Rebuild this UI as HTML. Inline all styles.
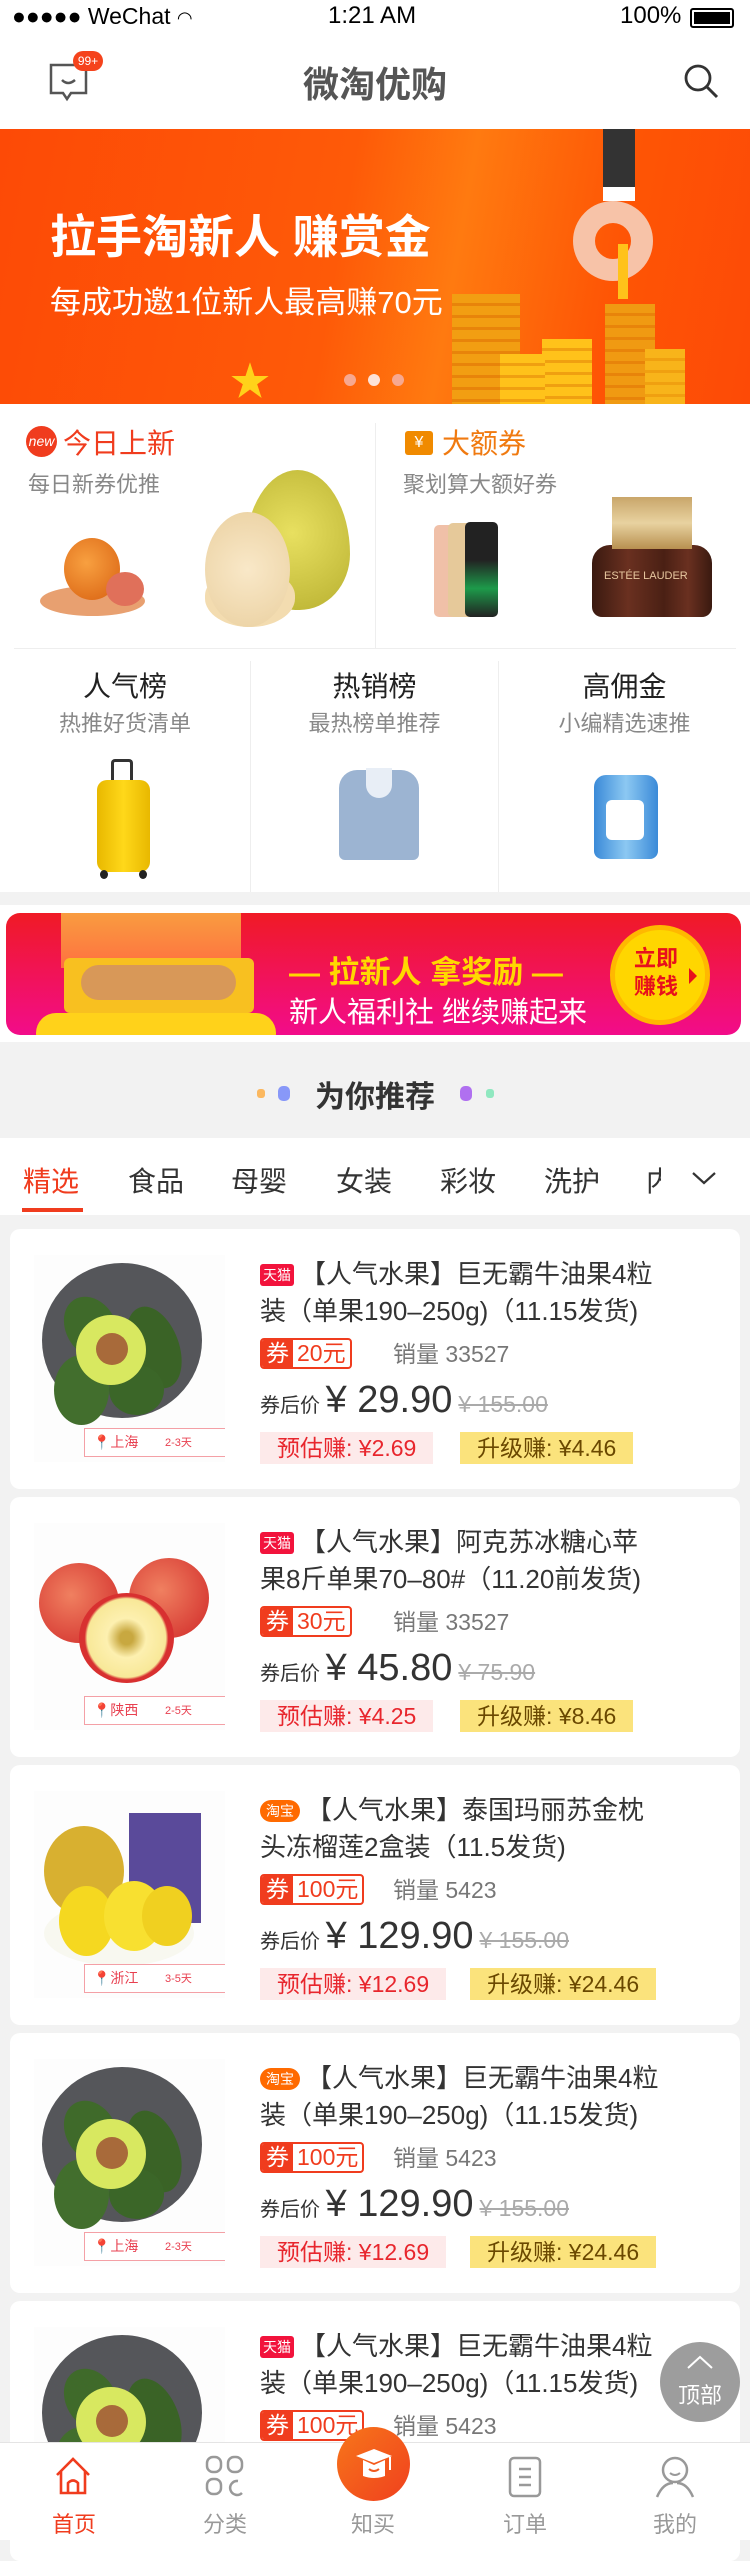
<!DOCTYPE html>
<html><head><meta charset="utf-8">
<style>
*{margin:0;padding:0;box-sizing:border-box}
body{width:750px;height:2540px;position:relative;overflow:hidden;background:#f2f2f2;font-family:"Liberation Sans","Noto Sans CJK SC",sans-serif;color:#333}
.a{position:absolute}
.w{white-space:nowrap}
.card{position:absolute;left:10px;width:730px;height:260px;background:#fff;border-radius:10px;overflow:hidden}
.img{position:absolute;left:24px;top:26px;width:191px;height:207px;background:#fdfdfd}
.loc{position:absolute;left:50px;top:173px;width:141px;height:29px;border:1px solid #f4a0a6;border-right:none;background:#fff;font-size:11px;color:#e84050}
.t{position:absolute;left:250px;top:27px;font-size:26px;line-height:37px;color:#333;white-space:nowrap}
.bd{display:inline-block;vertical-align:3px;font-size:14px;line-height:22px;height:22px;color:#fff;padding:0 3px;margin-right:6px}
.tm{background:#f2133c;border-radius:3px}
.tb{background:#ff6a00;border-radius:11px;padding:0 6px}
.cp{position:absolute;left:250px;top:109px;height:31px;border:2px solid #f03c1e;border-radius:4px;font-size:23px;line-height:27px;display:flex;overflow:hidden}
.cp b{font-weight:normal;background:#f03c1e;color:#fff;padding:0 4px}
.cp i{font-style:normal;color:#f03c1e;padding:0 4px}
.sv{position:absolute;top:111px;font-size:23px;color:#777;line-height:28px}
.pr{position:absolute;left:250px;top:150px;white-space:nowrap;color:#333}
.pr s{color:#aaa;font-size:23px;margin-left:6px}
.e{position:absolute;top:203px;height:32px;line-height:32px;font-size:23px;padding:0 17px;white-space:nowrap}
.e1{left:250px;background:#fdeaea;color:#e8262d}
.e2{background:#fbe37c;color:#6a4800}
</style></head><body>
<div class="a" style="left:0;top:0;width:750px;height:130px;background:#fff"></div>
<div class="a w" style="left:12px;top:3px;font-size:23px;color:#000">●●●●● WeChat <span style="font-size:18px">&#x25E0;</span></div>
<div class="a w" style="left:328px;top:2px;font-size:24px;color:#000">1:21 AM</div>
<div class="a w" style="left:620px;top:2px;font-size:24px;color:#000">100%</div>
<div class="a" style="left:690px;top:8px;width:44px;height:20px;border:2px solid #000;border-radius:3px;padding:2px"><div style="width:100%;height:100%;background:#000"></div></div>
<svg class="a" style="left:48px;top:60px" width="44" height="44" viewBox="0 0 44 44"><path d="M3 33 V5 H38 V33 H23 L19 39 L15 33 Z" fill="none" stroke="#555" stroke-width="2.5"/><path d="M14 20 Q20 26 27 20" fill="none" stroke="#555" stroke-width="2.5"/></svg>
<div class="a" style="left:73px;top:51px;width:30px;height:20px;background:#f5431c;border-radius:10px;color:#fff;font-size:12px;line-height:20px;text-align:center">99+</div>
<div class="a w" style="left:0;width:750px;top:56px;text-align:center;font-size:36px;font-weight:bold;color:#555">微淘优购</div>
<svg class="a" style="left:682px;top:62px" width="40" height="40" viewBox="0 0 40 40"><circle cx="16" cy="16" r="12" fill="none" stroke="#333" stroke-width="2.8"/><path d="M25 25 L35 35" stroke="#333" stroke-width="3"/></svg>

<div class="a" style="left:0;top:129px;width:750px;height:275px;background:linear-gradient(100deg,#fd4a06 0%,#fe5a08 45%,#ff7a10 60%,#fe5505 80%,#fd4a06 100%);overflow:hidden">
 <div class="a w" style="left:50px;top:72px;font-size:46px;font-weight:bold;color:#fff">拉手淘新人 赚赏金</div>
 <div class="a w" style="left:50px;top:148px;font-size:31px;color:#fff">每成功邀1位新人最高赚70元</div>
 <div class="a" style="left:603px;top:0;width:32px;height:60px;background:#333"></div>
 <div class="a" style="left:603px;top:58px;width:32px;height:14px;background:#fff"></div>
 <div class="a" style="left:573px;top:72px;width:80px;height:80px;border-radius:50%;border:22px solid #f7c3a8"></div>
 <div class="a" style="left:618px;top:115px;width:10px;height:55px;background:#ffc21a"></div>
 <div class="a" style="left:452px;top:165px;width:68px;height:110px;background:repeating-linear-gradient(#f29e12 0 9px,#e8840a 9px 12px)"></div>
 <div class="a" style="left:542px;top:210px;width:50px;height:65px;background:repeating-linear-gradient(#ffc21a 0 9px,#f0a010 9px 12px)"></div>
 <div class="a" style="left:605px;top:175px;width:50px;height:100px;background:repeating-linear-gradient(#f09a12 0 9px,#e8840a 9px 12px)"></div>
 <div class="a" style="left:500px;top:225px;width:45px;height:50px;background:repeating-linear-gradient(#ffc21a 0 9px,#f0a010 9px 12px)"></div>
 <div class="a" style="left:645px;top:220px;width:40px;height:55px;background:repeating-linear-gradient(#f8b41a 0 9px,#f0a010 9px 12px)"></div>
 <div class="a" style="left:230px;top:220px;font-size:40px;color:#ffd21a">★</div>
 <div class="a" style="left:344px;top:245px;width:12px;height:12px;border-radius:50%;background:#f7a890"></div>
 <div class="a" style="left:368px;top:245px;width:12px;height:12px;border-radius:50%;background:#fde2d8"></div>
 <div class="a" style="left:392px;top:245px;width:12px;height:12px;border-radius:50%;background:#f7a890"></div>
</div>

<div class="a" style="left:0;top:404px;width:750px;height:488px;background:#fff"></div>
<div class="a" style="left:375px;top:423px;width:1px;height:225px;background:#eee"></div>
<div class="a" style="left:14px;top:648px;width:722px;height:1px;background:#eee"></div>
<div class="a" style="left:250px;top:661px;width:1px;height:231px;background:#eee"></div>
<div class="a" style="left:498px;top:661px;width:1px;height:231px;background:#eee"></div>
<div class="a" style="left:26px;top:426px;width:31px;height:31px;border-radius:50%;background:#f03c1e;color:#fff;font-size:14px;font-style:italic;line-height:31px;text-align:center">new</div>
<div class="a w" style="left:63px;top:422px;font-size:28px;color:#f03c1e">今日上新</div>
<div class="a w" style="left:28px;top:467px;font-size:22px;color:#888">每日新券优推</div>
<div class="a" style="left:405px;top:431px;width:28px;height:24px;background:#f08a00;border-radius:3px;color:#fff;font-size:16px;line-height:24px;text-align:center">¥</div>
<div class="a w" style="left:442px;top:422px;font-size:28px;color:#f07a10">大额券</div>
<div class="a w" style="left:403px;top:467px;font-size:22px;color:#888">聚划算大额好券</div>
<div class="a" style="left:40px;top:586px;width:105px;height:30px;border-radius:50%;background:#e8a070"></div>
<div class="a" style="left:64px;top:538px;width:56px;height:62px;border-radius:50%;background:radial-gradient(circle at 40% 40%,#f8a040,#d86010)"></div>
<div class="a" style="left:106px;top:572px;width:38px;height:34px;border-radius:50%;background:#e0705a"></div>
<div class="a" style="left:245px;top:470px;width:105px;height:140px;border-radius:50% 50% 48% 48%/60% 60% 40% 40%;background:radial-gradient(circle at 45% 45%,#e8e060,#b8b030)"></div>
<div class="a" style="left:205px;top:570px;width:90px;height:57px;border-radius:45% 45% 50% 50%;background:#f3dcb0"></div>
<div class="a" style="left:205px;top:512px;width:85px;height:115px;border-radius:50%;background:radial-gradient(circle,#f9e8c8,#ead0a0)"></div>
<div class="a" style="left:434px;top:525px;width:28px;height:92px;border-radius:5px;background:#f0c0a8"></div>
<div class="a" style="left:448px;top:523px;width:30px;height:94px;border-radius:5px;background:#e6c99a"></div>
<div class="a" style="left:465px;top:522px;width:33px;height:95px;border-radius:5px;background:linear-gradient(#222 40%,#1d9a4a 70%,#222)"></div>
<div class="a" style="left:592px;top:545px;width:120px;height:72px;border-radius:18px 18px 10px 10px;background:linear-gradient(90deg,#3a1a10,#6a3020 30%,#4a2014 60%,#6a3020 80%,#3a1a10)"></div>
<div class="a" style="left:612px;top:497px;width:80px;height:52px;background:linear-gradient(#c9a66a,#e8d2a0,#b89050)"></div>
<div class="a w" style="left:604px;top:570px;font-size:11px;color:#e8c8a0">ESTÉE LAUDER</div>

<div class="a w" style="left:0;width:250px;top:665px;text-align:center;font-size:28px;color:#222">人气榜</div>
<div class="a w" style="left:0;width:250px;top:706px;text-align:center;font-size:22px;color:#888">热推好货清单</div>
<div class="a w" style="left:250px;width:249px;top:665px;text-align:center;font-size:28px;color:#222">热销榜</div>
<div class="a w" style="left:250px;width:249px;top:706px;text-align:center;font-size:22px;color:#888">最热榜单推荐</div>
<div class="a w" style="left:499px;width:251px;top:665px;text-align:center;font-size:28px;color:#222">高佣金</div>
<div class="a w" style="left:499px;width:251px;top:706px;text-align:center;font-size:22px;color:#888">小编精选速推</div>
<div class="a" style="left:111px;top:759px;width:22px;height:22px;border:3px solid #333;border-bottom:none;border-radius:4px 4px 0 0"></div>
<div class="a" style="left:97px;top:780px;width:53px;height:92px;border-radius:10px;background:linear-gradient(90deg,#e8b800,#ffd81a,#e8b800)"></div>
<div class="a" style="left:100px;top:870px;width:8px;height:9px;background:#222;border-radius:50%"></div>
<div class="a" style="left:139px;top:870px;width:8px;height:9px;background:#222;border-radius:50%"></div>
<div class="a" style="left:339px;top:770px;width:80px;height:90px;border-radius:18px 18px 6px 6px;background:#9cb4d2"></div>
<div class="a" style="left:366px;top:768px;width:26px;height:30px;border-radius:0 0 13px 13px;background:#e8eef6"></div>
<div class="a" style="left:594px;top:775px;width:64px;height:84px;border-radius:12px 12px 8px 8px;background:linear-gradient(90deg,#3a8ad8,#8cc8f2,#3a8ad8)"></div>
<div class="a" style="left:606px;top:800px;width:38px;height:40px;background:#fff;border-radius:6px"></div>

<div class="a" style="left:0;top:905px;width:750px;height:137px;background:#fff"></div>
<div class="a" style="left:6px;top:913px;width:735px;height:122px;border-radius:14px;background:linear-gradient(#f01a25,#f20c8a);overflow:hidden">
 <div class="a" style="left:55px;top:-5px;width:180px;height:60px;background:linear-gradient(#f8a040,#ff7040);border-radius:6px 6px 0 0"></div>
 <div class="a" style="left:58px;top:45px;width:190px;height:55px;background:#f8c020;border-radius:6px"></div>
 <div class="a" style="left:75px;top:52px;width:155px;height:35px;background:#d89858;border-radius:20px"></div>
 <div class="a" style="left:30px;top:100px;width:240px;height:40px;background:#ffd21a;border-radius:20px"></div>
 <div class="a w" style="left:283px;top:34px;font-size:31px;font-weight:bold;color:#ffd800">— 拉新人 拿奖励 —</div>
 <div class="a w" style="left:283px;top:76px;font-size:29px;color:#fff">新人福利社 继续赚起来</div>
 <div class="a" style="left:604px;top:12px;width:100px;height:100px;border-radius:50%;background:#ffd600;border:5px solid #ffb800"></div>
 <div class="a" style="left:628px;top:32px;font-size:22px;line-height:28px;font-weight:bold;color:#e8101c">立即<br>赚钱</div>
 <div class="a" style="left:683px;top:55px;width:0;height:0;border-left:8px solid #e8101c;border-top:8px solid transparent;border-bottom:8px solid transparent"></div>
</div>

<div class="a w" style="left:0;width:750px;top:1072px;text-align:center;font-size:30px;font-weight:bold;color:#333">为你推荐</div>
<div class="a" style="left:257px;top:1089px;width:8px;height:9px;border-radius:3px;background:#fbb860"></div>
<div class="a" style="left:278px;top:1086px;width:12px;height:15px;border-radius:5px;background:#8898f8"></div>
<div class="a" style="left:460px;top:1086px;width:12px;height:15px;border-radius:5px;background:#b070f0"></div>
<div class="a" style="left:486px;top:1089px;width:8px;height:9px;border-radius:3px;background:#90e8c0"></div>

<div class="a" style="left:0;top:1138px;width:750px;height:77px;background:#fff"></div>
<div class="a w" style="left:0;top:1160px;font-size:28px;color:#333;width:750px">
 <span class="a" style="left:23px;color:#f03c1e">精选</span>
 <span class="a" style="left:128px">食品</span>
 <span class="a" style="left:231px">母婴</span>
 <span class="a" style="left:336px">女装</span>
 <span class="a" style="left:440px">彩妆</span>
 <span class="a" style="left:544px">洗护</span>
 <span class="a" style="left:646px;width:15px;overflow:hidden">内衣</span>
</div>
<svg class="a" style="left:690px;top:1168px" width="28" height="20" viewBox="0 0 28 20"><path d="M3 5 L14 15 L25 5" fill="none" stroke="#333" stroke-width="2.2"/></svg>
<div class="a" style="left:22px;top:1208px;width:61px;height:4px;background:#f03c1e"></div>

<div class="card" style="top:1229px">
 <div class="img"><div class="a" style="left:8px;top:8px;width:160px;height:155px;border-radius:50%;background:#55565a"></div>
  <div class="a" style="left:32px;top:40px;width:50px;height:65px;border-radius:50%;background:#3f6a2a;transform:rotate(-30deg)"></div>
  <div class="a" style="left:95px;top:50px;width:50px;height:85px;border-radius:50%;background:#3a6326;transform:rotate(-20deg)"></div>
  <div class="a" style="left:20px;top:100px;width:55px;height:70px;border-radius:50%;background:#426e2d"></div>
  <div class="a" style="left:75px;top:110px;width:55px;height:50px;border-radius:50%;background:#3b6628"></div>
  <div class="a" style="left:42px;top:60px;width:70px;height:70px;border-radius:50%;background:#d8e860"></div>
  <div class="a" style="left:62px;top:78px;width:32px;height:32px;border-radius:50%;background:#a86a3a"></div>
  <div class="loc"><span style="position:absolute;left:8px;top:3px;font-size:14px">📍上海</span><span style="position:absolute;left:80px;top:5px">2-3天</span></div></div>
 <div class="t"><span class="bd tm">天猫</span>【人气水果】巨无霸牛油果4粒<br>装（单果190–250g)（11.15发货)</div>
 <div class="cp"><b>券</b><i>20元</i></div><div class="sv" style="left:383px">销量 33527</div>
 <div class="pr"><span style="font-size:20px">券后价 </span><span style="font-size:38px">¥ 29.90</span><s>¥ 155.00</s></div>
 <div class="e e1">预估赚: ¥2.69</div><div class="e e2" style="left:450px">升级赚: ¥4.46</div>
</div>

<div class="card" style="top:1497px">
 <div class="img">
  <div class="a" style="left:5px;top:40px;width:80px;height:80px;border-radius:50%;background:radial-gradient(circle at 40% 40%,#f08060,#d02828)"></div>
  <div class="a" style="left:95px;top:35px;width:80px;height:80px;border-radius:50%;background:radial-gradient(circle at 40% 40%,#f08060,#d02828)"></div>
  <div class="a" style="left:45px;top:70px;width:95px;height:90px;border-radius:50%;background:radial-gradient(circle,#c8a840 10%,#fdf0b0 30%,#f8e898 60%,#d83030 64%)"></div>
  <div class="loc"><span style="position:absolute;left:8px;top:3px;font-size:14px">📍陕西</span><span style="position:absolute;left:80px;top:5px">2-5天</span></div></div>
 <div class="t"><span class="bd tm">天猫</span>【人气水果】阿克苏冰糖心苹<br>果8斤单果70–80#（11.20前发货)</div>
 <div class="cp"><b>券</b><i>30元</i></div><div class="sv" style="left:383px">销量 33527</div>
 <div class="pr"><span style="font-size:20px">券后价 </span><span style="font-size:38px">¥ 45.80</span><s>¥ 75.90</s></div>
 <div class="e e1">预估赚: ¥4.25</div><div class="e e2" style="left:450px">升级赚: ¥8.46</div>
</div>

<div class="card" style="top:1765px">
 <div class="img">
  <div class="a" style="left:95px;top:22px;width:72px;height:110px;background:#5a4a9a"></div>
  <div class="a" style="left:10px;top:35px;width:80px;height:90px;border-radius:50%;background:#d8b030"></div>
  <div class="a" style="left:10px;top:110px;width:150px;height:65px;border-radius:50%;background:#f8f8f0"></div>
  <div class="a" style="left:25px;top:95px;width:55px;height:70px;border-radius:50%;background:#f5d820"></div>
  <div class="a" style="left:70px;top:90px;width:60px;height:70px;border-radius:50%;background:#f8e030"></div>
  <div class="a" style="left:108px;top:95px;width:50px;height:60px;border-radius:50%;background:#f0d020"></div>
  <div class="loc"><span style="position:absolute;left:8px;top:3px;font-size:14px">📍浙江</span><span style="position:absolute;left:80px;top:5px">3-5天</span></div></div>
 <div class="t"><span class="bd tb">淘宝</span>【人气水果】泰国玛丽苏金枕<br>头冻榴莲2盒装（11.5发货)</div>
 <div class="cp"><b>券</b><i>100元</i></div><div class="sv" style="left:383px">销量 5423</div>
 <div class="pr"><span style="font-size:20px">券后价 </span><span style="font-size:38px">¥ 129.90</span><s>¥ 155.00</s></div>
 <div class="e e1">预估赚: ¥12.69</div><div class="e e2" style="left:460px">升级赚: ¥24.46</div>
</div>

<div class="card" style="top:2033px">
 <div class="img"><div class="a" style="left:8px;top:8px;width:160px;height:155px;border-radius:50%;background:#55565a"></div>
  <div class="a" style="left:32px;top:40px;width:50px;height:65px;border-radius:50%;background:#3f6a2a;transform:rotate(-30deg)"></div>
  <div class="a" style="left:95px;top:50px;width:50px;height:85px;border-radius:50%;background:#3a6326;transform:rotate(-20deg)"></div>
  <div class="a" style="left:20px;top:100px;width:55px;height:70px;border-radius:50%;background:#426e2d"></div>
  <div class="a" style="left:75px;top:110px;width:55px;height:50px;border-radius:50%;background:#3b6628"></div>
  <div class="a" style="left:42px;top:60px;width:70px;height:70px;border-radius:50%;background:#d8e860"></div>
  <div class="a" style="left:62px;top:78px;width:32px;height:32px;border-radius:50%;background:#a86a3a"></div>
  <div class="loc"><span style="position:absolute;left:8px;top:3px;font-size:14px">📍上海</span><span style="position:absolute;left:80px;top:5px">2-3天</span></div></div>
 <div class="t"><span class="bd tb">淘宝</span>【人气水果】巨无霸牛油果4粒<br>装（单果190–250g)（11.15发货)</div>
 <div class="cp"><b>券</b><i>100元</i></div><div class="sv" style="left:383px">销量 5423</div>
 <div class="pr"><span style="font-size:20px">券后价 </span><span style="font-size:38px">¥ 129.90</span><s>¥ 155.00</s></div>
 <div class="e e1">预估赚: ¥12.69</div><div class="e e2" style="left:460px">升级赚: ¥24.46</div>
</div>

<div class="card" style="top:2301px">
 <div class="img"><div class="a" style="left:8px;top:8px;width:160px;height:155px;border-radius:50%;background:#55565a"></div>
  <div class="a" style="left:32px;top:40px;width:50px;height:65px;border-radius:50%;background:#3f6a2a;transform:rotate(-30deg)"></div>
  <div class="a" style="left:95px;top:50px;width:50px;height:85px;border-radius:50%;background:#3a6326;transform:rotate(-20deg)"></div>
  <div class="a" style="left:20px;top:100px;width:55px;height:70px;border-radius:50%;background:#426e2d"></div>
  <div class="a" style="left:42px;top:60px;width:70px;height:70px;border-radius:50%;background:#d8e860"></div>
  <div class="a" style="left:62px;top:78px;width:32px;height:32px;border-radius:50%;background:#a86a3a"></div></div>
 <div class="t"><span class="bd tm">天猫</span>【人气水果】巨无霸牛油果4粒<br>装（单果190–250g)（11.15发货)</div>
 <div class="cp"><b>券</b><i>100元</i></div><div class="sv" style="left:383px">销量 5423</div>
</div>

<div class="a" style="left:660px;top:2342px;width:80px;height:80px;border-radius:50%;background:rgba(140,140,140,.85);color:#fff;text-align:center">
 <svg style="position:absolute;left:26px;top:12px" width="28" height="16" viewBox="0 0 28 16"><path d="M2 14 L14 3 L26 14" fill="none" stroke="#fff" stroke-width="2"/></svg>
 <div style="position:absolute;left:0;width:80px;top:36px;font-size:22px">顶部</div>
</div>

<div class="a" style="left:0;top:2442px;width:750px;height:98px;background:#fff;border-top:1px solid #e4e4e4"></div>
<svg class="a" style="left:54px;top:2456px" width="38" height="40" viewBox="0 0 38 40"><path d="M3 19 L19 3 L35 19 M7 15 V37 H31 V15 M14 37 V27 Q19 22 24 27 V37" fill="none" stroke="#f03c1e" stroke-width="2.6"/></svg>
<svg class="a" style="left:205px;top:2455px" width="40" height="42" viewBox="0 0 40 42"><rect x="2" y="2" width="14" height="15" rx="6" fill="none" stroke="#999" stroke-width="2.5"/><rect x="23" y="2" width="14" height="15" rx="6" fill="none" stroke="#999" stroke-width="2.5"/><rect x="2" y="24" width="14" height="15" rx="6" fill="none" stroke="#999" stroke-width="2.5"/><path d="M37 38 A7 7 0 1 1 33 26" fill="none" stroke="#999" stroke-width="2.5"/></svg>
<div class="a" style="left:337px;top:2427px;width:73px;height:74px;border-radius:50%;background:linear-gradient(135deg,#f7761a,#f0401e)"></div>
<svg class="a" style="left:352px;top:2446px" width="44" height="36" viewBox="0 0 44 36"><path d="M4 10 L22 3 L40 10 L22 17 Z" fill="#fff"/><path d="M11 14 V30 Q22 34 33 30 V14 L22 19 Z" fill="#fff"/><path d="M17 23 Q22 27 27 23" stroke="#f05a1e" stroke-width="2" fill="none"/><path d="M38 11 V24" stroke="#fff" stroke-width="2"/></svg>
<svg class="a" style="left:507px;top:2455px" width="36" height="44" viewBox="0 0 36 44"><rect x="3" y="3" width="30" height="38" rx="4" fill="none" stroke="#999" stroke-width="2.5"/><path d="M12 14 H24 M12 22 H24 M12 30 H24" stroke="#999" stroke-width="2.5"/></svg>
<svg class="a" style="left:655px;top:2455px" width="40" height="44" viewBox="0 0 40 44"><circle cx="20" cy="15" r="12" fill="none" stroke="#999" stroke-width="2.5"/><path d="M15 18 Q20 22 25 18" stroke="#999" stroke-width="2" fill="none"/><path d="M2 42 Q8 28 18 28 M38 42 Q32 28 22 28" fill="none" stroke="#999" stroke-width="2.5"/></svg>
<div class="a w" style="left:52px;top:2507px;font-size:22px;color:#f03c1e">首页</div>
<div class="a w" style="left:203px;top:2507px;font-size:22px;color:#999">分类</div>
<div class="a w" style="left:351px;top:2507px;font-size:22px;color:#999">知买</div>
<div class="a w" style="left:503px;top:2507px;font-size:22px;color:#999">订单</div>
<div class="a w" style="left:653px;top:2507px;font-size:22px;color:#999">我的</div>
</body></html>
